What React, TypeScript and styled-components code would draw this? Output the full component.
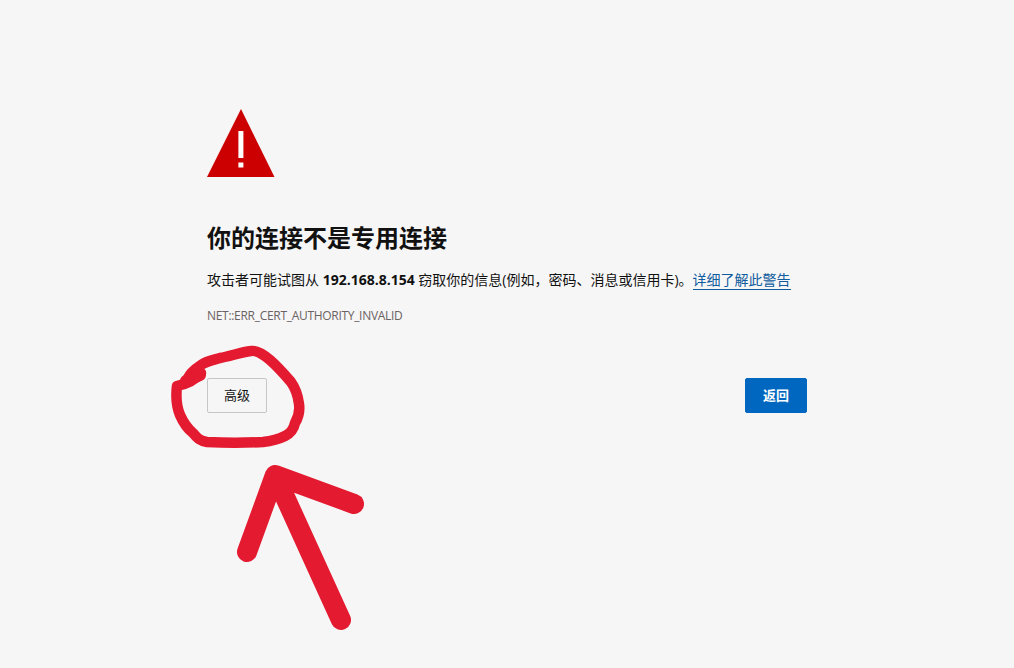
import React from "react";
import styled, { createGlobalStyle } from "styled-components";

const Global = createGlobalStyle`
  html, body { margin: 0; padding: 0; background: #f6f6f6; }
  body { font-family: "Open Sans", "Noto Sans CJK SC", sans-serif; color: #111; }
`;

const Page = styled.div`
  position: relative;
  width: 1014px;
  height: 668px;
  overflow: hidden;
  box-sizing: border-box;
  padding: 109px 0 0 207px;
`;

const Main = styled.main`
  display: flex;
  flex-direction: column;
  width: 600px;
`;

const WarningIcon = styled.svg`
  display: block;
  width: 68px;
  height: 68px;
`;

const Heading = styled.h1`
  margin: 44px 0 0;
  font-size: 24px;
  line-height: 34px;
  font-weight: 700;
  color: #111;
`;

const Message = styled.p`
  margin: 15px 0 0;
  font-size: 14px;
  line-height: 20px;
  color: #111;
  white-space: nowrap;
`;

const Host = styled.strong`
  font-weight: 700;
`;

const LearnMore = styled.a`
  color: #0f5c9e;
  text-decoration: none;
  border-bottom: 1px solid #0f5c9e;
`;

const ErrorCode = styled.div`
  margin-top: 18px;
  font-size: 12px;
  line-height: 16px;
  letter-spacing: -0.3px;
  color: #6b6262;
`;

const Actions = styled.div`
  display: flex;
  justify-content: space-between;
  margin-top: 54px;
`;

const Button = styled.button<{ $primary?: boolean }>`
  box-sizing: border-box;
  height: 35px;
  width: ${(p) => (p.$primary ? "62px" : "60px")};
  padding: 0 0 2px;
  border-radius: 2px;
  border: 1px solid ${(p) => (p.$primary ? "#0067c0" : "#c6c6c6")};
  background: ${(p) => (p.$primary ? "#0067c0" : "#f6f6f6")};
  color: ${(p) => (p.$primary ? "#fff" : "#111")};
  font-family: inherit;
  font-size: 13px;
  font-weight: ${(p) => (p.$primary ? 700 : 400)};
`;

const Annotation = styled.svg`
  position: absolute;
  left: 0;
  top: 0;
  width: 1014px;
  height: 668px;
  pointer-events: none;
`;

export default function App() {
  return (
    <Page>
      <Global />
      <Main>
        <WarningIcon viewBox="0 0 68 68">
          <path d="M34 0 L67.5 68 L0 68 Z" fill="#cc0000" />
          <path d="M31.4 22 H36.4 V49 H31.4 Z" fill="#fff" />
          <rect x="31.4" y="53.5" width="5" height="5" fill="#fff" />
        </WarningIcon>
        <Heading>你的连接不是专用连接</Heading>
        <Message>
          攻击者可能试图从 <Host>192.168.8.154</Host> 窃取你的信息(例如，密码、消息或信用卡)。
          <LearnMore href="#">详细了解此警告</LearnMore>
        </Message>
        <ErrorCode>NET::ERR_CERT_AUTHORITY_INVALID</ErrorCode>
        <Actions>
          <Button>高级</Button>
          <Button $primary>返回</Button>
        </Actions>
      </Main>
      <Annotation viewBox="0 0 1014 668" fill="none" stroke="#e41a30" strokeLinecap="round" strokeLinejoin="round">
        <path
          strokeWidth="10.5"
          d="M201 373 C195 380 186 384 177 386 C176 394 176 405 180 415 C184 424 188 429 193 433 C197 438 200 441 207 442 C225 443 245 443 263 442 C272 441 279 439 285 436 C291 433 294 428 295 423 C298 418 300 411 299 404 C298 396 296 389 291 382 C285 375 277 366 270 360 C263 354 257 350 251 351 C241 352 231 356 220 358 C213 360 207 361 201 365 C195 369 190 373 188 378"
        />
        <path strokeWidth="12" d="M186 381 L200 375" />
        <path strokeWidth="20" d="M247 552 L275 475 L354 504 M275 475 L341 620" />
      </Annotation>
    </Page>
  );
}
